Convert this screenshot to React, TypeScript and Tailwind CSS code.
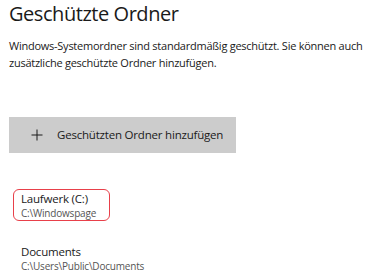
import React from "react";

export default function App() {
  return (
    <div className="w-[371px] h-[277px] bg-white overflow-hidden pl-[9px] pt-[1px]" style={{ fontFamily: '"Open Sans", "Noto Sans", sans-serif' }}>
      <h1 className="text-[20px] leading-[26px] font-normal text-[#1a1a1a] tracking-[-0.45px]">Geschützte Ordner</h1>
      <p className="mt-[11px] text-[11px] leading-[16.5px] text-[#1a1a1a] tracking-[-0.25px] w-[362px]">
        Windows-Systemordner sind standardmäßig geschützt. Sie können auch zusätzliche geschützte Ordner hinzufügen.
      </p>
      <button className="mt-[46px] w-[227px] h-[36px] bg-[#cccccc] flex items-center pl-[22px] text-[#1a1a1a]">
        <svg width="12" height="12" viewBox="0 0 12 12" className="shrink-0">
          <path d="M6 0.5V11.5M0.5 6H11.5" stroke="#1a1a1a" strokeWidth="1" />
        </svg>
        <span className="ml-[14px] text-[11.5px] tracking-[-0.2px]">Geschützten Ordner hinzufügen</span>
      </button>
      <div className="mt-[36px] ml-[4px] w-[97px] h-[32px] border border-[#e8404a] rounded-[6px] pl-[7px] pt-[1px]">
        <div className="text-[11.5px] leading-[15px] text-[#1a1a1a] tracking-[-0.2px]">Laufwerk (C:)</div>
        <div className="text-[10px] leading-[14px] text-[#555555] tracking-[-0.2px]">C:\Windowspage</div>
      </div>
      <div className="mt-[23px] ml-[12px]">
        <div className="text-[11.5px] leading-[15px] text-[#1a1a1a] tracking-[-0.2px]">Documents</div>
        <div className="text-[10px] leading-[14px] text-[#555555] tracking-[-0.2px]">C:\Users\Public\Documents</div>
      </div>
    </div>
  );
}
